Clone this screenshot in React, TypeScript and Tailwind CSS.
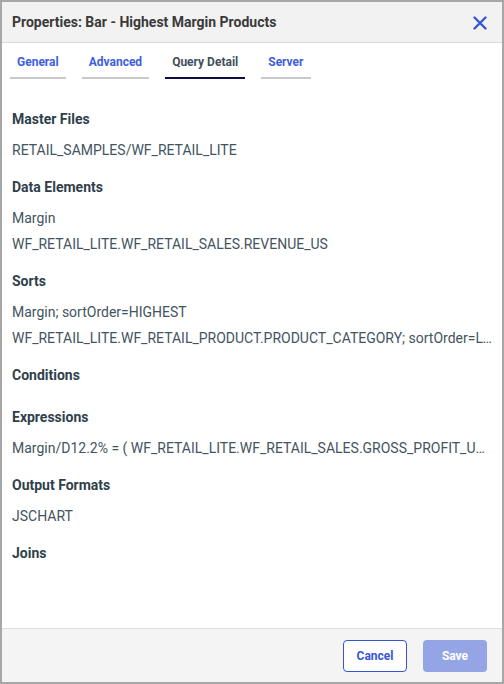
import React from "react";

interface Section {
   title: string;
   items: string[];
}

const sections: Section[] = [
   { title: "Master Files", items: ["RETAIL_SAMPLES/WF_RETAIL_LITE"] },
   {
      title: "Data Elements",
      items: ["Margin", "WF_RETAIL_LITE.WF_RETAIL_SALES.REVENUE_US"],
   },
   {
      title: "Sorts",
      items: [
         "Margin; sortOrder=HIGHEST",
         "WF_RETAIL_LITE.WF_RETAIL_PRODUCT.PRODUCT_CATEGORY; sortOrder=LOWEST",
      ],
   },
   { title: "Conditions", items: [] },
   {
      title: "Expressions",
      items: ["Margin/D12.2% = ( WF_RETAIL_LITE.WF_RETAIL_SALES.GROSS_PROFIT_US / WF_RETAIL_LITE.WF_RETAIL_SALES.REVENUE_US ) * 100"],
   },
   { title: "Output Formats", items: ["JSCHART"] },
   { title: "Joins", items: [] },
];

const tabs = ["General", "Advanced", "Query Detail", "Server"];

const App: React.FC = () => {
   const active = "Query Detail";

   return (
      <div
         className="w-[504px] h-[684px] border-2 border-[#a7a7a7] bg-white flex flex-col overflow-hidden"
         style={{ fontFamily: "Roboto, 'Liberation Sans', sans-serif" }}>
         <div className="h-[41px] shrink-0 flex items-center justify-between pl-[10px] pr-[14px] pt-[1px] bg-[#f2f2f2] border-b border-[#d9d9d9]">
            <h2 className="text-[14px] font-bold text-[#3a3a3a]">Properties: Bar - Highest Margin Products</h2>
            <button type="button" className="w-4 h-4 flex items-center justify-center">
               <svg width="14" height="14" viewBox="0 0 14 14">
                  <path d="M1.5 1.5 L12.5 12.5 M12.5 1.5 L1.5 12.5" stroke="#3557d6" strokeWidth="2.4" strokeLinecap="round" />
               </svg>
            </button>
         </div>

         <div className="shrink-0 flex gap-4 pl-[8px] pt-[11px]">
            {tabs.map((tab) => (
               <div
                  key={tab}
                  className={`px-[7px] pb-[7px] text-[12px] leading-[16px] font-bold border-b-2 ${
                     tab === active ? "border-[#0c0c47] text-[#3f505c]" : "border-[#c9c9c9] text-[#3d5ee0]"
                  }`}>
                  {tab}
               </div>
            ))}
         </div>

         <div className="flex-1 pt-[16px] px-[10px] min-w-0">
            {sections.map((section) => (
               <div key={section.title}>
                  <div className="pt-[14px] pb-[8px] text-[14px] leading-[20px] font-bold text-[#2f3f4b]">
                     {section.title}
                  </div>
                  {section.items.map((item) => (
                     <div key={item} className="h-[26px] leading-[26px] text-[14px] text-[#435461] truncate">
                        {item}
                     </div>
                  ))}
               </div>
            ))}
         </div>

         <div className="h-[54px] shrink-0 flex items-center justify-end gap-4 pr-[15px] bg-[#f4f4f4] border-t border-[#dcdcdc]">
            <button
               type="button"
               className="w-[64px] h-[32px] rounded-[4px] border border-[#3656d8] bg-white text-[12px] font-bold text-[#3656d8]">
               Cancel
            </button>
            <button
               type="button"
               className="w-[64px] h-[32px] rounded-[4px] bg-[#94a5e6] text-[12px] font-bold text-white">
               Save
            </button>
         </div>
      </div>
   );
};

export default App;
